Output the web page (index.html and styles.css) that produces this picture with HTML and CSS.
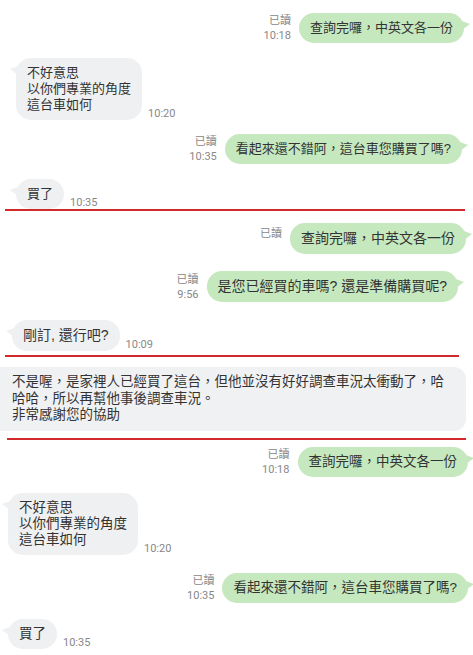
FILE: index.html
```html
<!DOCTYPE html>
<html lang="zh-Hant">
<head>
    <meta charset="UTF-8">
    <meta name="viewport" content="width=device-width, initial-scale=1.0">
    <title>對話截圖</title>
    <link rel="stylesheet" href="styles.css">
</head>
<body>

<div class="page">

    <!-- first capture -->
    <div class="shot shot-one">
        <div class="row out pr-9 mt-13">
            <div class="meta"><span>已讀</span><span>10:18</span></div>
            <div class="bubble">查詢完囉，中英文各一份</div>
        </div>
        <div class="row in pl-16 mt-15">
            <div class="bubble">不好意思<br>以你們專業的角度<br>這台車如何</div>
            <div class="time">10:20</div>
        </div>
        <div class="row out pr-11 mt-14">
            <div class="meta"><span>已讀</span><span>10:35</span></div>
            <div class="bubble">看起來還不錯阿，這台車您購買了嗎?</div>
        </div>
        <div class="row in pl-16 mt-15">
            <div class="bubble">買了</div>
            <div class="time">10:35</div>
        </div>
    </div>
    <div class="cut cut-one"></div>

    <!-- second capture -->
    <div class="shot shot-two">
        <div class="row out pr-7 mt-12">
            <div class="meta meta-top"><span>已讀</span></div>
            <div class="bubble">查詢完囉，中英文各一份</div>
        </div>
        <div class="row out pr-15 mt-17">
            <div class="meta"><span>已讀</span><span>9:56</span></div>
            <div class="bubble">是您已經買的車嗎? 還是準備購買呢?</div>
        </div>
        <div class="row in pl-12 mt-18">
            <div class="bubble">剛訂, 還行吧?</div>
            <div class="time">10:09</div>
        </div>
    </div>
    <div class="cut cut-two"></div>

    <div class="note">
        不是喔，是家裡人已經買了這台，但他並沒有好好調查車況太衝動了，哈<br>
        哈哈，所以再幫他事後調查車況。<br>
        非常感謝您的協助
    </div>
    <div class="cut cut-three"></div>

    <!-- third capture -->
    <div class="shot shot-three">
        <div class="row out pr-5 mt-7">
            <div class="meta"><span>已讀</span><span>10:18</span></div>
            <div class="bubble">查詢完囉，中英文各一份</div>
        </div>
        <div class="row in pl-8 mt-16">
            <div class="bubble">不好意思<br>以你們專業的角度<br>這台車如何</div>
            <div class="time">10:20</div>
        </div>
        <div class="row out pr-5 mt-18">
            <div class="meta"><span>已讀</span><span>10:35</span></div>
            <div class="bubble">看起來還不錯阿，這台車您購買了嗎?</div>
        </div>
        <div class="row in pl-8 mt-16">
            <div class="bubble">買了</div>
            <div class="time">10:35</div>
        </div>
    </div>

</div>

</body>
</html>
```

FILE: styles.css
```css
body {
    margin: 0;
    background-color: #fff;
    font-family: "Liberation Sans", "Noto Sans CJK TC", sans-serif;
    color: #333;
}
.page {
    width: 473px;
}
.shot {
    display: flex;
    flex-direction: column;
}
.shot-one {
    font-size: 13px;
}
.shot-two {
    font-size: 14px;
}
.shot-three {
    font-size: 13.5px;
}
.row {
    display: flex;
    align-items: flex-end;
    gap: 8px;
}
.row.out {
    justify-content: flex-end;
}
.row.in {
    gap: 6px;
}
.bubble {
    position: relative;
    padding: 7px 11px;
    line-height: 16px;
    border-radius: 15px;
}
.shot-two .bubble {
    line-height: 17px;
}
.out .bubble {
    background-color: #c6e8be;
}
.in .bubble {
    background-color: #eff0f2;
}
.out .bubble::after {
    content: "";
    position: absolute;
    right: -6px;
    top: 8px;
    border-left: 8px solid #c6e8be;
    border-top: 3px solid transparent;
    border-bottom: 6px solid transparent;
}
.in .bubble::before {
    content: "";
    position: absolute;
    left: -6px;
    top: 8px;
    border-right: 8px solid #eff0f2;
    border-top: 3px solid transparent;
    border-bottom: 6px solid transparent;
}
.meta {
    display: flex;
    flex-direction: column;
    align-items: flex-end;
    font-family: Roboto, "Noto Sans CJK TC", sans-serif;
    font-size: 11px;
    line-height: 15px;
    color: #888;
}
.meta-top {
    align-self: flex-start;
    margin-top: 3px;
}
.time {
    font-family: Roboto, sans-serif;
    font-size: 11px;
    line-height: 12px;
    color: #888;
}
.cut {
    height: 2px;
    background-color: #d22a2a;
}
.cut-one {
    margin: 0 8px 0 5px;
}
.cut-two {
    margin: 4px 14px 0 5px;
}
.cut-three {
    margin: 7px 7px 0 7px;
}
.note {
    margin: 10px 7px 0 0;
    padding: 7px 12px;
    font-size: 13.5px;
    line-height: 16.5px;
    background-color: #f0f1f3;
    border-radius: 0 12px 12px 0;
}
.pr-5 { padding-right: 5px; }
.pr-7 { padding-right: 7px; }
.pr-9 { padding-right: 9px; }
.pr-11 { padding-right: 11px; }
.pr-15 { padding-right: 15px; }
.pl-8 { padding-left: 8px; }
.pl-12 { padding-left: 12px; }
.pl-16 { padding-left: 16px; }
.mt-7 { margin-top: 7px; }
.mt-12 { margin-top: 12px; }
.mt-13 { margin-top: 13px; }
.mt-14 { margin-top: 14px; }
.mt-15 { margin-top: 15px; }
.mt-16 { margin-top: 16px; }
.mt-17 { margin-top: 17px; }
.mt-18 { margin-top: 18px; }
```
